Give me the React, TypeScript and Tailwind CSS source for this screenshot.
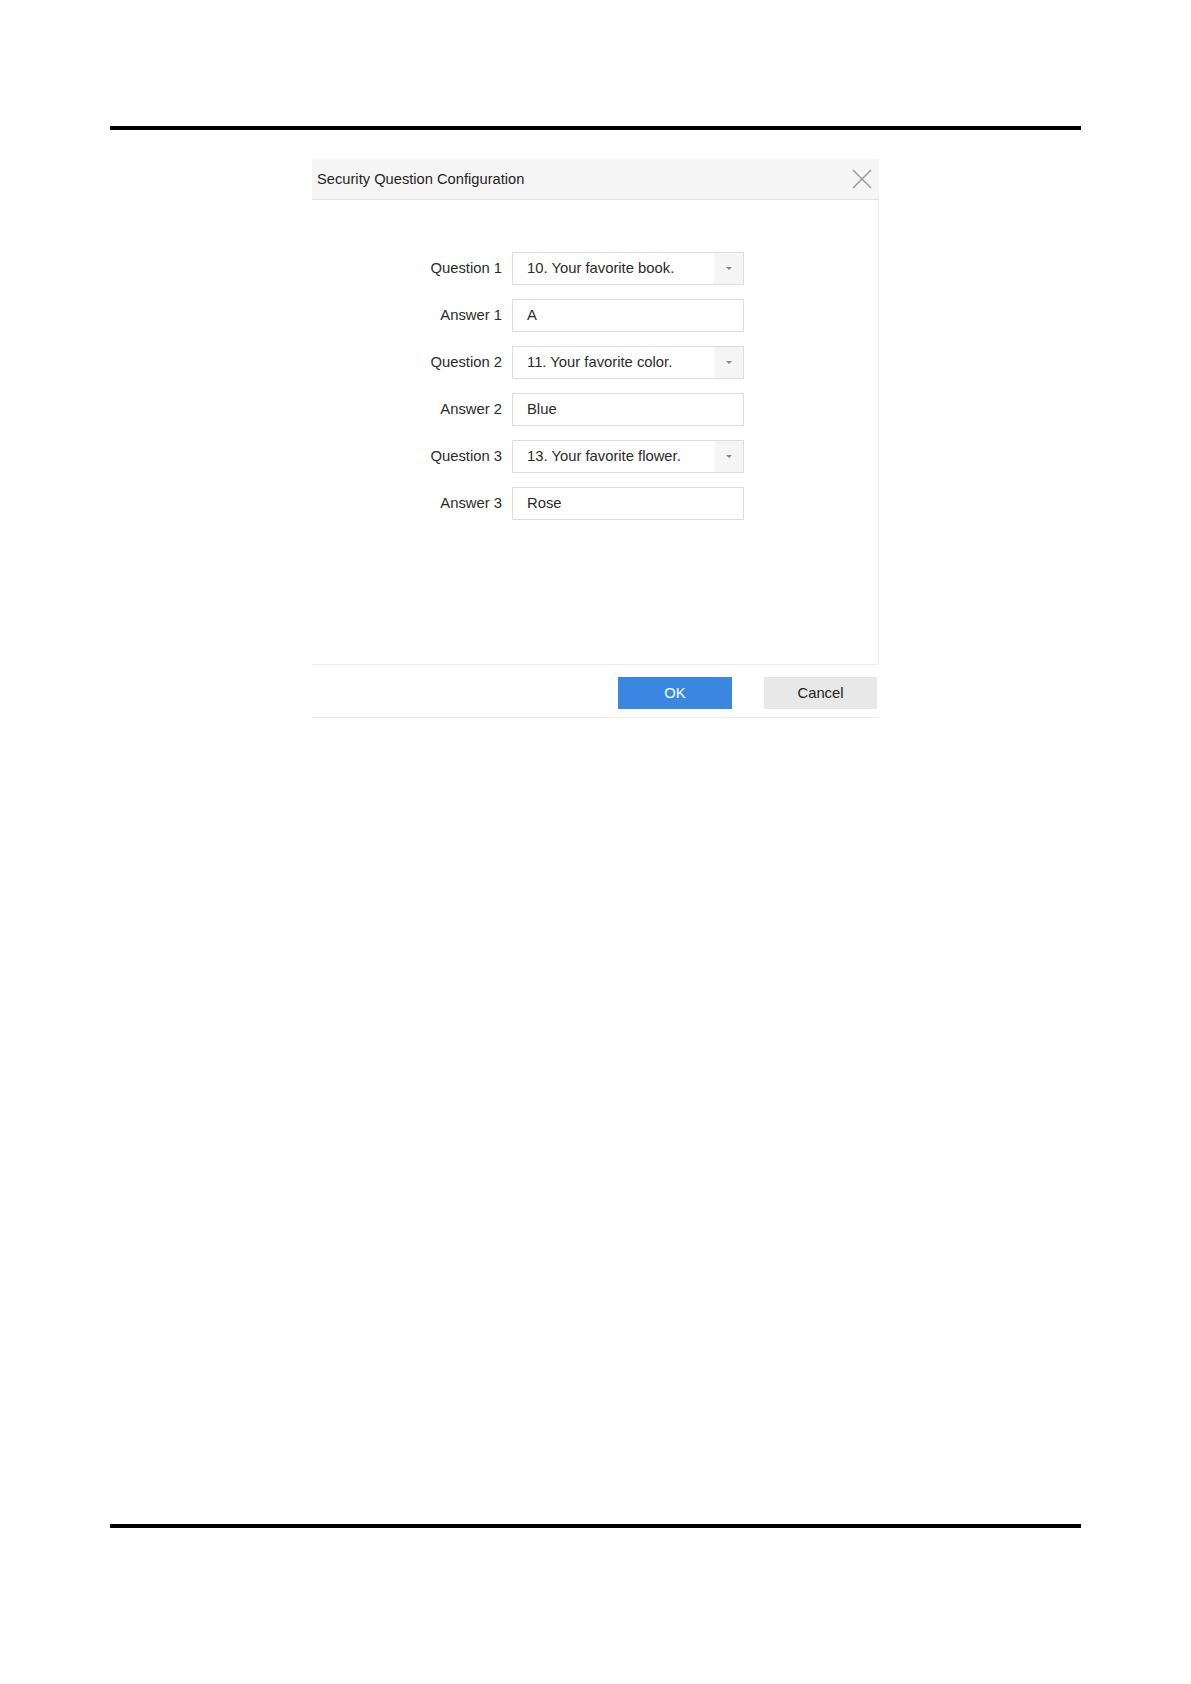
import React from 'react';

const rows = [
  { label: 'Question 1', value: '10. Your favorite book.', select: true },
  { label: 'Answer 1', value: 'A', select: false },
  { label: 'Question 2', value: '11. Your favorite color.', select: true },
  { label: 'Answer 2', value: 'Blue', select: false },
  { label: 'Question 3', value: '13. Your favorite flower.', select: true },
  { label: 'Answer 3', value: 'Rose', select: false },
];

const Field = ({ value, select }: { value: string; select: boolean }) => (
  <div className="flex h-[33px] w-[232px] border border-[#dcdcdc] bg-white">
    <div className="flex flex-1 items-center pl-[14px] text-[14.8px] text-[#2a2a2a]">{value}</div>
    {select && (
      <div className="flex w-[29px] items-center justify-center bg-[#f5f5f5]">
        <span className="block h-0 w-0 border-x-[3px] border-t-[3px] border-x-transparent border-t-[#888]" />
      </div>
    )}
  </div>
);

const App: React.FC = () => {
  return (
    <div className="flex h-[1684px] w-[1191px] flex-col bg-white px-[110px] font-['Liberation_Sans',Arial,sans-serif]">
      <div className="mt-[126px] h-[4px] w-full bg-black" />

      {/* Dialog */}
      <div className="ml-[202px] mt-[29px] flex w-[567px] flex-col">
        <div className="flex h-[41px] items-center justify-between border-b border-[#e2e2e2] bg-[#f5f5f5] pl-[5px] pr-[6px]">
          <span className="text-[14.7px] text-[#1f1f1f]">Security Question Configuration</span>
          <svg width="20" height="20" viewBox="0 0 20 20" className="mr-[1px]">
            <path d="M1 1 L19 19 M19 1 L1 19" stroke="#9a9a9a" strokeWidth="1.5" fill="none" />
          </svg>
        </div>

        <div className="flex h-[464px] flex-col gap-[14px] border-r border-[#eeeeee] pt-[52px]">
          {rows.map((r) => (
            <div key={r.label} className="flex items-center">
              <div className="w-[200px] pr-[10px] text-right text-[14.8px] text-[#2a2a2a]">{r.label}</div>
              <Field value={r.value} select={r.select} />
            </div>
          ))}
        </div>

        <div className="flex h-[54px] items-start justify-end gap-[32px] border-y border-[#ececec] pr-[2px] pt-[12px]">
          <button className="h-[32px] w-[114px] bg-[#3a87e2] text-[14.8px] text-white">OK</button>
          <button className="h-[32px] w-[113px] bg-[#e8e8e8] text-[14.8px] text-[#222]">Cancel</button>
        </div>
      </div>

      <div className="mt-[806px] h-[4px] w-full bg-black" />
    </div>
  );
};

export default App;
